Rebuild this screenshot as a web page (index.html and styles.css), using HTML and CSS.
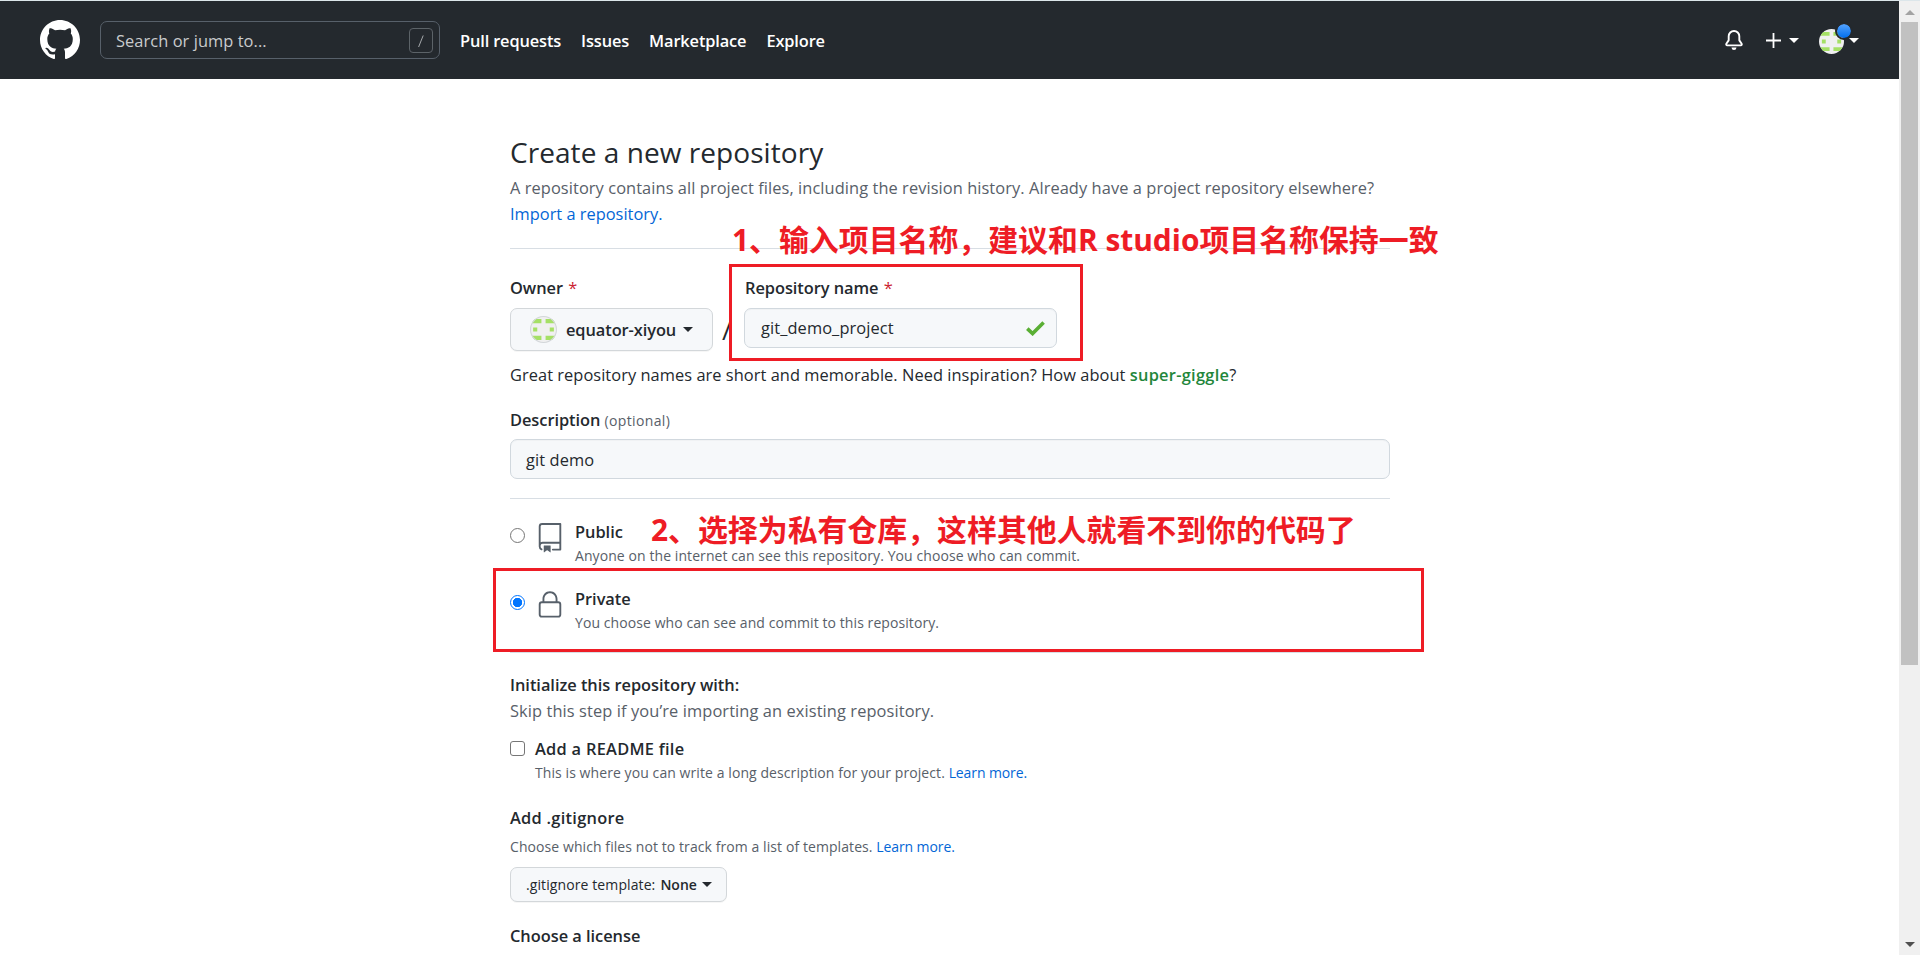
FILE: index.html
```
<!DOCTYPE html>
<html lang="en">
<head>
<meta charset="utf-8">
<title>Create a new repository</title>
<link rel="stylesheet" href="styles.css">
</head>
<body>
<div class="window">
  <div class="page">
    <header class="header">
      <svg class="logo" viewBox="0 0 16 16"><path fill-rule="evenodd" d="M8 0C3.58 0 0 3.58 0 8c0 3.54 2.29 6.53 5.47 7.59.4.07.55-.17.55-.38 0-.19-.01-.82-.01-1.49-2.01.37-2.53-.49-2.69-.94-.09-.23-.48-.94-.82-1.13-.28-.15-.68-.52-.01-.53.63-.01 1.08.58 1.23.82.72 1.21 1.87.87 2.33.66.07-.52.28-.87.51-1.07-1.78-.2-3.64-.89-3.64-3.95 0-.87.31-1.59.82-2.15-.08-.2-.36-1.02.08-2.12 0 0 .67-.21 2.2.82.64-.18 1.32-.27 2-.27.68 0 1.36.09 2 .27 1.53-1.04 2.2-.82 2.2-.82.44 1.1.16 1.92.08 2.12.51.56.82 1.27.82 2.15 0 3.07-1.87 3.75-3.65 3.95.29.25.54.73.54 1.48 0 1.07-.01 1.93-.01 2.2 0 .21.15.46.55.38A8.013 8.013 0 0016 8c0-4.42-3.58-8-8-8z"/></svg>
      <div class="search"><span class="search-text">Search or jump to...</span>
        <svg class="slash-key" viewBox="0 0 24 25"><rect x=".5" y=".5" width="23" height="24" rx="3.5"/><path d="M14.2 7.5 9.6 19"/></svg>
      </div>
      <nav class="nav"><a>Pull requests</a><a>Issues</a><a>Marketplace</a><a>Explore</a></nav>
      <div class="tools">
        <svg class="bell" viewBox="0 0 16 16"><path d="M8 16a2 2 0 001.985-1.75c.017-.137-.097-.25-.235-.25h-3.5c-.138 0-.252.113-.235.25A2 2 0 008 16z"/><path fill-rule="evenodd" d="M8 1.5A3.5 3.5 0 004.500 5v2.947c0 .346-.102.683-.294.97l-1.703 2.556a.018.018 0 00-.003.01l.001.006c0 .002.002.004.004.006a.017.017 0 00.006.004l.007.001h10.964l.007-.001a.016.016 0 00.006-.004.016.016 0 00.004-.006l.001-.007a.017.017 0 00-.003-.01l-1.703-2.554a1.750 1.750 0 01-.294-.97V5A3.500 3.500 0 008 1.500zM3 5a5 5 0 0110 0v2.947c0 .05.015.098.042.139l1.703 2.555A1.518 1.518 0 0113.482 13H2.518a1.518 1.518 0 01-1.263-2.360l1.703-2.554A.25.25 0 003 7.947V5z"/></svg>
        <svg class="plus" viewBox="0 0 15 15"><path d="M7.500 0v15M0 7.500h15"/></svg>
        <i class="caret"></i>
        <div class="user">
          <svg class="avatar" viewBox="0 0 26 26"><use href="#ident"/></svg>
          <i class="dot"></i>
        </div>
        <i class="caret user-caret"></i>
      </div>
    </header>

    <svg class="defs"><defs>
      <clipPath id="round"><circle cx="13" cy="13" r="13"/></clipPath>
      <g id="ident"><g clip-path="url(#round)"><path fill="#f0f0f0" d="M0 0h26v26H0z"/><path fill="#a5e065" d="M2 3h9v4H2zM15 3h9v4h-9zM3 11h4v4H3zM19 11h4v4h-4zM2 19h9v4H2zM15 19h9v4h-9z"/></g></g>
    </defs></svg>

    <main class="main">
      <h1 class="title">Create a new repository</h1>
      <p class="lead">A repository contains all project files, including the revision history. Already have a project repository elsewhere?<br><a class="import">Import a repository.</a></p>
      <hr class="rule rule-a">

      <section class="name-row">
        <div class="field">
          <label class="label">Owner <b class="req">*</b></label>
          <button class="btn owner"><svg class="avatar avatar-owner" viewBox="0 0 26 26"><use href="#ident"/><circle class="ring" cx="13" cy="13" r="12.5"/></svg><span>equator-xiyou</span><i class="caret"></i></button>
        </div>
        <span class="divider">/</span>
        <div class="field">
          <label class="label repo-label">Repository name <b class="req">*</b></label>
          <div class="input repo"><span>git_demo_project</span><svg class="check" viewBox="0 0 19 15"><path d="M1.300 7.600 6.600 12.600 17.600 1.600"/></svg></div>
        </div>
      </section>
      <p class="hint">Great repository names are short and memorable. Need inspiration? How about <b class="suggest">super-giggle</b>?</p>

      <label class="label desc-label">Description <span class="optional">(optional)</span></label>
      <div class="input desc">git demo</div>
      <hr class="rule rule-b">

      <section class="option">
        <i class="radio"></i>
        <svg class="kind" viewBox="0 0 24 24"><path fill-rule="evenodd" d="M3 2.75A2.75 2.75 0 015.75 0h14.5a.75.75 0 01.75.75v20.5a.75.75 0 01-.75.75h-6a.75.75 0 010-1.500h5.250v-4H6A1.500 1.500 0 004.500 18v.75c0 .716.430 1.334 1.050 1.605a.75.75 0 01-.6 1.374A3.250 3.250 0 013 18.750v-16zM19.500 1.500V15H6c-.546 0-1.059.146-1.500.401V2.750c0-.69.560-1.250 1.250-1.250H19.500z"/><path d="M7 18.250a.25.25 0 01.25-.25h5a.25.25 0 01.25.25v5.010a.25.25 0 01-.397.201l-2.206-1.604a.25.25 0 00-.294 0L7.397 23.460a.25.25 0 01-.397-.2v-5.010z"/></svg>
        <div class="option-text"><span class="strong">Public</span><span class="note">Anyone on the internet can see this repository. You choose who can commit.</span></div>
      </section>
      <section class="option option-private">
        <i class="radio on"></i>
        <svg class="kind" viewBox="0 0 24 24"><path fill-rule="evenodd" d="M6 9V7.250C6 3.845 8.503 1 12 1s6 2.845 6 6.250V9h.5a2.500 2.500 0 012.500 2.500v8a2.500 2.500 0 01-2.500 2.500h-13A2.500 2.500 0 013 19.500v-8A2.500 2.500 0 015.500 9H6zm1.500-1.750C7.500 4.580 9.422 2.500 12 2.500c2.578 0 4.500 2.080 4.500 4.750V9h-9V7.250zm-3 4.250a1 1 0 011-1h13a1 1 0 011 1v8a1 1 0 01-1 1h-13a1 1 0 01-1-1v-8z"/></svg>
        <div class="option-text"><span class="strong">Private</span><span class="note">You choose who can see and commit to this repository.</span></div>
      </section>
      <hr class="rule rule-c">

      <p class="strong init">Initialize this repository with:</p>
      <p class="skip">Skip this step if you’re importing an existing repository.</p>
      <section class="readme">
        <i class="box"></i>
        <div class="option-text"><span class="strong wide">Add a README file</span><span class="note">This is where you can write a long description for your project. <a class="more">Learn more.</a></span></div>
      </section>
      <p class="strong wide ignore">Add .gitignore</p>
      <p class="note choose">Choose which files not to track from a list of templates. <a class="more">Learn more.</a></p>
      <button class="btn template"><span>.gitignore template:</span> <b>None</b><i class="caret"></i></button>
      <p class="strong license">Choose a license</p>
    </main>
  </div>
  <aside class="scrollbar"><i class="arrow up"></i><i class="thumb"></i><i class="arrow down"></i></aside>
</div>

<div class="frame frame-name"></div>
<div class="frame frame-private"></div>
<div class="callout callout-name"><span class="latin">1</span>、输入项目名称，建议和<span class="latin">R studio</span>项目名称保持一致</div>
<div class="callout callout-private"><span class="latin">2</span>、选择为私有仓库，这样其他人就看不到你的代码了</div>
</body>
</html>
```
FILE: styles.css
```
* { box-sizing: border-box; }
body {
  margin: 0;
  height: 955px;
  overflow: hidden;
  background: #fff;
  color: #24292e;
  font: 16.4px/26px "Open Sans", "Noto Sans", "Noto Sans CJK SC", sans-serif;
}
p, h1, hr { margin: 0; }
a { color: #0366d6; }
i { display: block; }
.window { display: flex; height: 955px; border-top: 1px solid #dce6ea; }
.page { flex: 1; height: 954px; overflow: hidden; }
.defs { display: block; width: 0; height: 0; }

.header { display: flex; align-items: center; height: 78px; padding-left: 40px; background: #24292e; color: #fff; }
.logo { width: 40px; height: 40px; margin-right: 20px; fill: #fff; }
.search { display: flex; align-items: center; justify-content: space-between; width: 340px; height: 38px; padding: 0 6px 0 15px; border: 1px solid #57606a; border-radius: 7px; color: #c9cbcd; }
.search-text { padding-top: 1px; letter-spacing: .07px; }
.slash-key { width: 24px; height: 25px; fill: none; stroke: #5c6368; }
.slash-key path { stroke: #a4a8ab; }
.nav { display: flex; gap: 20px; margin-left: 20px; padding-top: 1px; font-weight: 600; letter-spacing: -.14px; }
.nav a { color: #fff; }
.tools { display: flex; align-items: center; margin-left: auto; padding-right: 40px; }
.bell { width: 20px; height: 20px; margin-right: 22px; fill: #fff; }
.plus { width: 15px; height: 15px; margin-right: 8px; fill: none; stroke: #fff; stroke-width: 1.8; }
.caret { width: 0; height: 0; border: 5px solid transparent; border-top-color: currentColor; border-bottom: 0; }
.avatar { display: block; width: 25px; height: 25px; }
.user { position: relative; margin: 3px 5px 0 20px; }
.dot { position: absolute; right: -9px; top: -7px; width: 18px; height: 18px; border: 2px solid #24292e; border-radius: 50%; background: linear-gradient(#54a3ff, #006eed) padding-box; }

.main { width: 880px; margin: 0 0 0 510px; padding-top: 51px; }
.title { font-size: 28px; line-height: 45px; font-weight: 400; letter-spacing: .06px; }
.lead { color: #586069; letter-spacing: .075px; white-space: nowrap; }
.import { letter-spacing: 0; }
.rule { height: 1px; border: 0; background: #d8dee4; }
.rule-a { margin-top: 21px; }
.name-row { display: flex; align-items: flex-start; margin-top: 26px; }
.label { display: block; font-weight: 600; letter-spacing: -.05px; }
.repo-label { padding-left: 1px; }
.req { color: #cb2431; font-weight: 400; margin-left: 1px; }
.btn { display: flex; align-items: center; border: 1px solid #d3d7da; border-radius: 7px; background: #f6f8fa; color: #24292e; box-shadow: 0 1px 0 rgba(27, 31, 35, .04); font: inherit; }
.owner { width: 203px; height: 43px; margin-top: 7px; padding: 0 0 0 19px; font-weight: 600; letter-spacing: -.08px; }
.avatar-owner { width: 27px; height: 27px; margin-right: 9px; }
.ring { fill: none; stroke: #d3d7da; }
.owner .caret { margin-left: 7px; }
.divider { width: 31px; padding: 35px 0 0 9px; font-size: 26px; line-height: 40px; }
.input { display: flex; align-items: center; height: 40px; border: 1px solid #d1d8de; border-radius: 7px; background: #f6f8fa; box-shadow: inset 0 1px 0 rgba(225, 228, 232, .3); letter-spacing: .1px; }
.repo { width: 313px; margin-top: 7px; padding: 0 11px 0 16px; justify-content: space-between; }
.check { width: 19px; height: 15px; fill: none; stroke: #5aaf34; stroke-width: 3.6; }
.hint { margin-top: 11px; letter-spacing: .05px; }
.suggest { color: #22863a; font-weight: 600; letter-spacing: .27px; }
.desc-label { margin-top: 19px; }
.optional { color: #586069; font-size: 14px; line-height: 1; font-weight: 400; letter-spacing: .35px; }
.desc { margin-top: 6px; padding: 2px 15px 0; }
.rule-b { margin-top: 19px; }
.option { display: flex; align-items: flex-start; height: 67px; padding-top: 20px; }
.radio { width: 15px; height: 15px; margin: 9px 10px 0 0; border: 1px solid #767676; border-radius: 50%; background: #fff; }
.radio.on { border: 1.5px solid #0075ff; background: radial-gradient(circle, #0075ff 4.4px, #fff 5px); }
.kind { width: 30px; height: 30px; margin-right: 10px; margin-top: 4px; fill: #57606a; }
.option-text { display: flex; flex-direction: column; align-items: flex-start; }
.strong { font-weight: 600; line-height: 26px; letter-spacing: -.03px; }
.wide { letter-spacing: .27px; }
.note { color: #586069; font-size: 14px; line-height: 22px; letter-spacing: .08px; }
.more { letter-spacing: -.1px; }
.rule-c { margin-top: 19px; }
.init { margin-top: 19px; }
.skip { color: #586069; letter-spacing: .1px; }
.readme { display: flex; margin-top: 12px; }
.box { width: 15px; height: 15px; margin: 5px 10px 0 0; border: 1px solid #767676; border-radius: 3px; }
.ignore { margin-top: 21px; }
.choose { margin-top: 5px; }
.template { width: 217px; height: 35px; margin-top: 9px; padding: 0 0 0 15px; font-size: 14px; letter-spacing: .1px; }
.template b { margin-left: 5px; font-weight: 600; letter-spacing: 0; }
.template .caret { margin-left: 5px; }
.license { margin-top: 21px; }

.scrollbar { display: flex; flex-direction: column; align-items: center; width: 21px; background: #f0f0f0; }
.arrow { width: 0; height: 0; border: 5px solid transparent; }
.up { margin-top: 9px; border-top: 0; border-bottom-color: #a3a3a3; }
.thumb { width: 17px; height: 643px; margin-top: 7px; background: #c1c1c1; }
.down { margin: auto 0 8px; border-bottom: 0; border-top-color: #505050; }

/* Red annotations lying over the page */
.frame { position: absolute; border: 3px solid #ee1c25; }
.frame-name { left: 729px; top: 264px; width: 354px; height: 97px; }
.frame-private { left: 493px; top: 568px; width: 931px; height: 84px; }
.callout { position: absolute; color: #ee1c25; font: 700 29.9px/32px "Noto Sans CJK SC", sans-serif; white-space: nowrap; }
.callout-name { left: 732px; top: 222px; }
.callout-private { left: 651px; top: 512px; }
.latin { font-family: "Open Sans", sans-serif; line-height: 1; }
```
